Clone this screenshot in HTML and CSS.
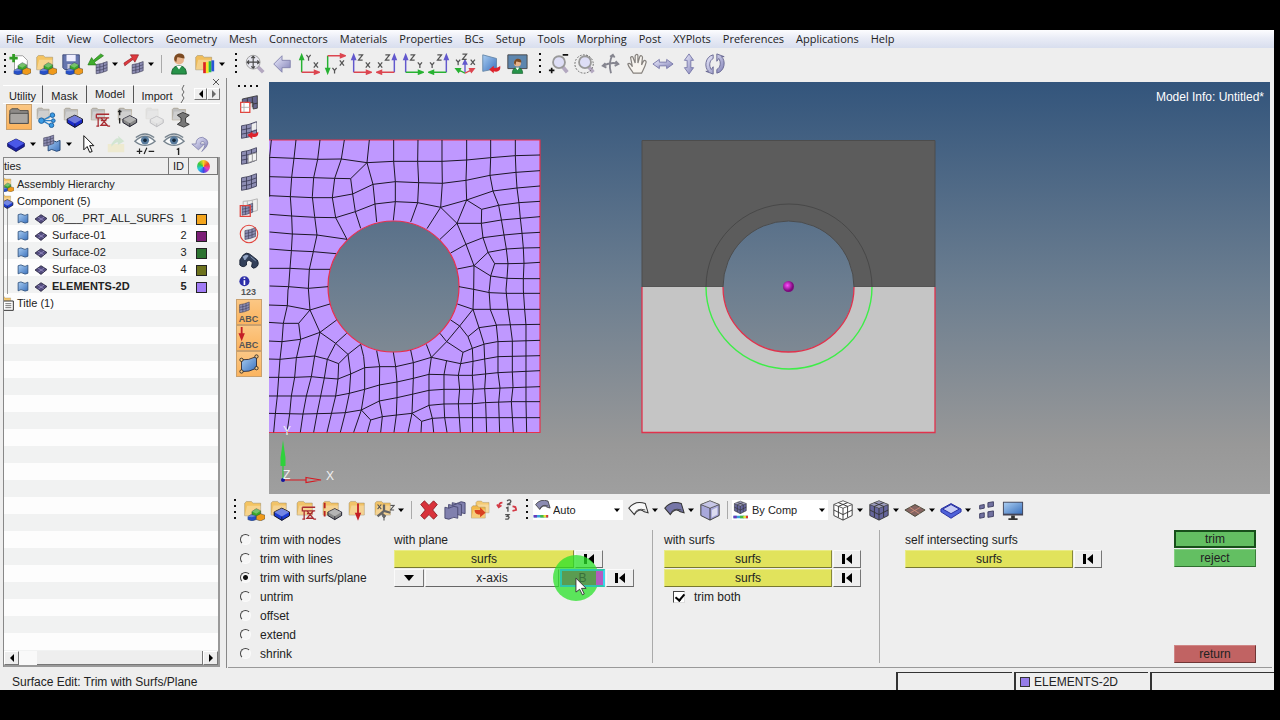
FILE: index.html
```html
<!DOCTYPE html>
<html lang="en">
<head>
<meta charset="utf-8">
<title>Model Info: Untitled*</title>
<link rel="stylesheet" href="styles.css">
</head>
<body>
<svg class="defs" aria-hidden="true">
<defs>
<linearGradient id="sky" x1="0" y1="0" x2="0" y2="1"><stop offset="0" stop-color="#33557c"/><stop offset=".5" stop-color="#6c7e90"/><stop offset=".88" stop-color="#989898"/><stop offset="1" stop-color="#9f9f9f"/></linearGradient>
<linearGradient id="lav" x1="0" y1="0" x2="1" y2="1"><stop offset="0" stop-color="#efefff"/><stop offset="1" stop-color="#7f7fb5"/></linearGradient>
<linearGradient id="blu" x1="0" y1="0" x2="1" y2="1"><stop offset="0" stop-color="#a9cdf2"/><stop offset="1" stop-color="#3c72bd"/></linearGradient>
<radialGradient id="ball" cx=".4" cy=".4"><stop offset="0" stop-color="#ff4cff"/><stop offset="1" stop-color="#7b0a7b"/></radialGradient>
<symbol id="folder" viewBox="0 0 24 24"><path d="M2 20V5l2-2h6l2 2h9v15z" fill="currentColor" stroke="#8b7a52" stroke-opacity=".5"/><path d="M2 20L5 8h16v12z" fill="#fff" opacity=".28"/></symbol>
<symbol id="box" viewBox="0 0 24 24"><path d="M2 11l10-5 10 5v5l-10 6-10-6z" fill="currentColor" stroke="#112" stroke-width="1.3"/><path d="M2 11l10-5 10 5-10 6z" fill="#fff" opacity=".38"/><path d="M12 17v5" stroke="#112"/></symbol>
<symbol id="c3" viewBox="0 0 24 24"><g stroke="#234" stroke-width=".6"><path d="M6 11l6-4 6 3v6l-6 4-6-3z" fill="#3ba82c"/><path d="M0 18l5-3 7 2v5l-6 2-6-2z" fill="#2750c8"/><path d="M12 17l6-3 6 2v5l-6 3-6-2z" fill="#ef9a1c"/></g><path d="M6 11l6-4 6 3-6 4zM0 18l5-3 7 2-6 2z" fill="#fff" opacity=".3"/></symbol>
<symbol id="mesh" viewBox="0 0 24 24"><path d="M3 7q9-1 18-5v15q-9 4-18 5z" fill="#8c8cb2" stroke="#3b3b55"/><path d="M9 6v15M15 4v15M3 12q9-1 18-5M3 17q9-1 18-5" fill="none" stroke="#3b3b55"/></symbol>
<symbol id="caret" viewBox="0 0 8 8"><path d="M1 2.500h6L4 6z" fill="#000"/></symbol>
<symbol id="new" viewBox="0 0 24 24"><path d="M6 3h9l5 5v13H6z" fill="#fff" stroke="#999"/><path d="M5 1v9M.5 5.500h9" stroke="#2f9b22" stroke-width="3"/><use href="#c3" width="19" height="19" x="5" y="5"/></symbol>
<symbol id="open" viewBox="0 0 24 24"><use href="#folder" color="#f4c462" width="22" height="22"/><use href="#c3" width="19" height="19" x="5" y="5"/></symbol>
<symbol id="save" viewBox="0 0 24 24"><path d="M2 2h18v16H4l-2-2z" fill="#6575ae" stroke="#3e4a78"/><path d="M6 2h10v7H6z" fill="#eef"/><path d="M7 12h9v6H7z" fill="#ccd"/><use href="#c3" width="19" height="19" x="5" y="5"/></symbol>
<symbol id="imp" viewBox="0 0 24 24"><use href="#mesh" width="16" height="16" x="8" y="8"/><path d="M15 1L7 8 5 5 1 13l9 0-2-3 10-7z" fill="#3fae2c" stroke="#237517" stroke-width=".7"/></symbol>
<symbol id="exp" viewBox="0 0 24 24"><use href="#mesh" width="16" height="16" x="8" y="8"/><path d="M1 11l9-6-2-3h9l-4 8-2-3-9 7z" fill="#df383d" stroke="#8f1d24" stroke-width=".7"/></symbol>
<symbol id="user" viewBox="0 0 24 24"><path d="M4 23c0-7 4-9 8-9s8 2 8 9z" fill="#27934a" stroke="#17602e"/><path d="M9 14l3 4 3-4z" fill="#fff"/><circle cx="12" cy="7" r="5.500" fill="#e8b48c"/><path d="M7 8c-2-9 12-10 11-2-4 0-6-2-8-1l-1 5z" fill="#7b4a22"/></symbol>
<symbol id="fcolor" viewBox="0 0 24 24"><use href="#folder" color="#f0be5c" width="22" height="22"/><path d="M10 10h3v12h-3z" fill="#d22"/><path d="M13 10h3v12h-3z" fill="#f5e42a"/><path d="M16 9h3v12h-3z" fill="#27b84b"/><path d="M19 8h3v12h-3z" fill="#2756d8"/></symbol>
<symbol id="zoomfit" viewBox="0 0 24 24"><path d="M15 15l6 6" stroke="#b3a8c0" stroke-width="4"/><circle cx="10" cy="10" r="7.500" fill="#e6e6ee" stroke="#999"/><path d="M10 3.500v13M3.500 10h13M8 5.500l2-2 2 2M8 14.500l2 2 2-2M5.500 8l-2 2 2 2M14.500 8l2 2-2 2" fill="none" stroke="#444" stroke-width="1.200"/></symbol>
<symbol id="back" viewBox="0 0 24 24"><path d="M3 12l9-9v5h9v8h-9v5z" fill="url(#lav)" stroke="#8383ad"/></symbol>
<symbol id="up" viewBox="0 0 24 24"><path d="M4 21V5M2 7l2-5 2 5z" fill="currentColor" stroke="currentColor" stroke-width="1.600"/></symbol>
<symbol id="right" viewBox="0 0 24 24"><path d="M4 21h14M18 19l5 2-5 2z" fill="currentColor" stroke="currentColor" stroke-width="1.600"/></symbol>
<symbol id="gx" viewBox="0 0 6 7"><path d="M1 1l4 5M5 1L1 6" stroke="#555" stroke-width="1.200"/></symbol>
<symbol id="gy" viewBox="0 0 6 7"><path d="M1 1l2 2.500L5 1M3 3.500V6.500" fill="none" stroke="#555" stroke-width="1.200"/></symbol>
<symbol id="gz" viewBox="0 0 6 7"><path d="M1 1h4L1 6h4" fill="none" stroke="#555" stroke-width="1.200"/></symbol>
<symbol id="xy" viewBox="0 0 24 24"><use href="#up" color="#27b232"/><use href="#right" color="#dc4650"/><use href="#gy" x="8" y="1" width="7" height="8"/><use href="#gx" x="16" y="9" width="7" height="8"/></symbol>
<symbol id="xyi" viewBox="0 0 24 24"><path d="M4 3v15M2 17l2 5 2-5z" fill="#27b232" stroke="#27b232" stroke-width="1.600"/><path d="M4 3h14M18 1l5 2-5 2z" fill="#dc4650" stroke="#dc4650" stroke-width="1.600"/><use href="#gy" x="8" y="15" width="7" height="8"/><use href="#gx" x="16" y="7" width="7" height="8"/></symbol>
<symbol id="zx" viewBox="0 0 24 24"><use href="#up" color="#6258cd"/><use href="#right" color="#dc4650"/><use href="#gz" x="8" y="1" width="7" height="8"/><use href="#gx" x="16" y="9" width="7" height="8"/></symbol>
<symbol id="xz" viewBox="0 0 24 24"><g transform="matrix(-1 0 0 1 24 0)"><use href="#up" color="#6258cd"/><use href="#right" color="#dc4650"/></g><use href="#gz" x="9" y="1" width="7" height="8"/><use href="#gx" x="1" y="9" width="7" height="8"/></symbol>
<symbol id="zy" viewBox="0 0 24 24"><use href="#up" color="#6258cd"/><use href="#right" color="#27b232"/><use href="#gz" x="8" y="1" width="7" height="8"/><use href="#gy" x="16" y="9" width="7" height="8"/></symbol>
<symbol id="yz" viewBox="0 0 24 24"><g transform="matrix(-1 0 0 1 24 0)"><use href="#up" color="#6258cd"/><use href="#right" color="#27b232"/></g><use href="#gz" x="9" y="1" width="7" height="8"/><use href="#gy" x="1" y="9" width="7" height="8"/></symbol>
<symbol id="iso" viewBox="0 0 24 24"><path d="M12 21V9M10 12l2-4 2 4z" fill="#6258cd" stroke="#6258cd" stroke-width="1.500"/><path d="M12 22l-8-4M7 17l-5 0 3 4z" fill="#27b232" stroke="#27b232" stroke-width="1.500"/><path d="M12 22l8-4M17 17l5 0-3 4z" fill="#dc4650" stroke="#dc4650" stroke-width="1.500"/><use href="#gy" x="1" y="6" width="7" height="8"/><use href="#gz" x="8" y="0" width="7" height="8"/><use href="#gx" x="17" y="6" width="7" height="8"/></symbol>
<symbol id="screen" viewBox="0 0 24 24"><path d="M3 2l15 4v11l-15 3z" fill="url(#blu)" stroke="#6788a8"/><path d="M22 14c1 6-3 7-7 6v2l-5-4 5-4v2c3 1 5 0 7-2z" fill="#dd222c"/></symbol>
<symbol id="uscreen" viewBox="0 0 24 24"><path d="M2 2h21v15H2z" fill="#5d86ae" stroke="#444"/><use href="#user" width="17" height="19" x="4" y="5"/></symbol>
<symbol id="lens" viewBox="0 0 24 24"><path d="M16 15l5 6" stroke="#b3a8c0" stroke-width="4"/><circle cx="12" cy="10" r="6.500" fill="#dedef6" stroke="#999" stroke-width="2"/></symbol>
<symbol id="zoomio" viewBox="0 0 24 24"><use href="#lens"/><path d="M16 2h6M1 19h6M4 16v6" stroke="#111" stroke-width="1.800"/></symbol>
<symbol id="zoomc" viewBox="0 0 24 24"><use href="#lens"/><circle cx="11" cy="12" r="10" fill="none" stroke="#555" stroke-dasharray="2 1.500" stroke-width=".9"/></symbol>
<symbol id="rot" viewBox="0 0 24 24"><path d="M14 2c-4 6-4 13-2 20M3 14c6-3 12-4 17-2M11 4l3-2 2 3M6 11l-3 3 4 2M17 9l3 3-4 2" fill="none" stroke="#85858f" stroke-width="2"/></symbol>
<symbol id="hand" viewBox="0 0 24 24"><path d="M8 22c-2-4-5-6-6-10 2-2 4 1 5 3L5 5c1-2 3-1 3 1l2 5V3c1-2 3-2 3 0v8l2-7c1-2 3-1 3 1l-1 8 2-4c2-2 3 0 3 1-1 5-3 8-5 12z" fill="#f7f4ef" stroke="#85817d" stroke-width="1.300"/></symbol>
<symbol id="lr" viewBox="0 0 24 24"><path d="M1 12l7-5v3h8V7l7 5-7 5v-3H8v3z" fill="url(#lav)" stroke="#7777a9"/></symbol>
<symbol id="ud" viewBox="0 0 24 24"><path d="M12 1l5 7h-3v8h3l-5 7-5-7h3V8H7z" fill="url(#lav)" stroke="#7777a9"/></symbol>
<symbol id="spin" viewBox="0 0 24 24"><path d="M10 2C1 4 0 16 5 20H2l8 3V15l-2 3C5 14 6 8 10 6zM14 22c9-2 10-14 5-18h3l-8-3v8l2-3c3 4 2 10-2 12z" fill="url(#lav)" stroke="#666691"/></symbol>
<symbol id="gfold" viewBox="0 0 24 24"><use href="#folder" color="#bdbdbd" width="22" height="20"/></symbol>
<symbol id="dfold" viewBox="0 0 24 24"><path d="M2 19V5l2-2h7l2 2h9v14z" fill="#8d8a87" stroke="#4c4a48"/><path d="M2 19V9l2-1h18v11z" fill="#a9a6a2" stroke="#4c4a48"/></symbol>
<symbol id="fasm" viewBox="0 0 24 24"><use href="#gfold" width="20" height="20"/><path d="M8 16l9-5M8 16l10 0M8 16l9 5" stroke="#2c81c8" stroke-width="1.500"/><g fill="#3b9be4" stroke="#1b5d9b"><circle cx="7" cy="16" r="3"/><circle cx="19" cy="10" r="2.500"/><circle cx="20" cy="16" r="2"/><circle cx="18" cy="21" r="2.500"/></g></symbol>
<symbol id="gbox" viewBox="0 0 24 24"><use href="#gfold" width="22" height="22"/><use href="#box" color="#1b2bc7" width="20" height="20" x="4" y="5"/></symbol>
<symbol id="anch" viewBox="0 0 24 24"><path d="M8 9h14M8 9v4h14M10 13v9M13 13h7l-7 8h7zM8 22h3M13 16h6M20 22h3" fill="none" stroke="currentColor" stroke-width="1.400"/></symbol>
<symbol id="gload" viewBox="0 0 24 24"><use href="#gfold" width="22" height="22"/><use href="#anch" color="#a82b31"/></symbol>
<symbol id="gprop" viewBox="0 0 24 24"><use href="#gfold" width="22" height="22"/><use href="#box" color="#888" width="18" height="18" x="6" y="6"/><path d="M4 4v6M4 13v6M2 6h4" stroke="#222" stroke-width="1.500"/></symbol>
<symbol id="gdis" viewBox="0 0 24 24"><g opacity=".25"><use href="#gfold" width="22" height="20"/><use href="#box" color="#bbb" width="18" height="17" x="6" y="7"/></g></symbol>
<symbol id="gsec" viewBox="0 0 24 24"><use href="#gfold" width="22" height="22"/><path d="M8 10l6-3 7 3-4 3v5l4 2-6 3-7-3 4-3v-4z" fill="#777" stroke="#333"/></symbol>
<symbol id="bbox" viewBox="0 0 24 24"><path d="M2 11l10-5 10 5v4l-10 6-10-6z" fill="#1a20a0" stroke="#0c0f50"/><path d="M2 11l10-5 10 5-10 6z" fill="#4a58e8"/></symbol>
<symbol id="surf" viewBox="0 0 24 24"><path d="M3 5q6-3 9 0t9-1v15q-6 3-9 0t-9 1z" fill="url(#blu)" stroke="#274b79" stroke-width="1.500"/></symbol>
<symbol id="msurf" viewBox="0 0 24 24"><use href="#surf" x="5" y="4" width="19" height="20"/><use href="#mesh" width="16" height="16" x="0" y="0"/></symbol>
<symbol id="cursor" viewBox="0 0 24 24"><path d="M7 2v17l4-4 3 7 3-1-3-7h5z" fill="#fff" stroke="#111" stroke-width="1.200"/></symbol>
<symbol id="upd" viewBox="0 0 24 24"><g opacity=".35"><path d="M3 12h18v9H3z" fill="#f0e59a"/><path d="M7 12q5-8 8-6l-1-3 7 6-7 4v-3q-3 0-7 5z" fill="#a0d6a0"/></g></symbol>
<symbol id="eye" viewBox="0 0 24 24"><path d="M1 9Q12-2 23 9 12 18 1 9z" fill="#f7f9fa" stroke="#77848f" stroke-width="1.500"/><path d="M2 5Q12-3 22 5" fill="none" stroke="#76838e" stroke-width="1.500"/><circle cx="12" cy="8" r="4.500" fill="#587b9d"/><circle cx="12" cy="8" r="2" fill="#162a3d"/></symbol>
<symbol id="eyepm" viewBox="0 0 24 24"><use href="#eye"/><path d="M3 20h6M6 17v6M11 23l3-7M16 20h6" stroke="#222" stroke-width="1.300"/></symbol>
<symbol id="eye1" viewBox="0 0 24 24"><use href="#eye"/><path d="M15 18l2-1v7" fill="none" stroke="#222" stroke-width="1.500"/></symbol>
<symbol id="undo" viewBox="0 0 24 24"><path d="M13 21Q27 9 14 4 6 4 6 12H1l8 7 7-7h-5q1-4 4-3 4 4-2 12z" fill="url(#lav)" stroke="#8383ad"/></symbol>
<symbol id="elem" viewBox="0 0 24 24"><path d="M1 13l11-8 11 7-11 9z" fill="#544d80" stroke="#222038" stroke-width="1.500"/><path d="M6 9l11 7M7 17l11-8" stroke="#aaa3d5" stroke-width="1.200"/></symbol>
<symbol id="v1" viewBox="0 0 24 24"><path d="M4 6l18-4v15l-5 1v-8l-13 3z" fill="#66668e" stroke="#333"/><path d="M10 5v7M16 4v12M17 12l5-1" stroke="#333"/><path d="M2 10h11v12H2z" fill="#fff" stroke="#e2443d" stroke-width="1.500"/><path d="M6 10v12M2 16h11" stroke="#aaa"/></symbol>
<symbol id="v2" viewBox="0 0 24 24"><use href="#mesh"/><path d="M15 5l6-2v8l-6 2z" fill="#eee"/><path d="M23 14c1 6-3 7-7 6v3l-6-5 6-4v2c3 1 5 0 7-2z" fill="#dd222c"/></symbol>
<symbol id="v3" viewBox="0 0 24 24"><use href="#mesh"/><path d="M11 11l10-3v9l-10 3z" fill="#f3f3f3" stroke="#888"/><path d="M16 10v8" stroke="#888"/></symbol>
<symbol id="v5" viewBox="0 0 24 24"><path d="M5 4q8 0 17-3v14q-8 3-17 3zM10 4v13M16 3v13" fill="#eee" stroke="#aaa"/><use href="#mesh" width="18" height="17" x="1" y="5"/><path d="M1.500 9h12v13h-12z" fill="none" stroke="#e2443d" stroke-width="1.500"/></symbol>
<symbol id="v6" viewBox="0 0 24 24"><use href="#mesh" width="17" height="17" x="5" y="3"/><circle cx="12" cy="12" r="10.500" fill="none" stroke="#e2443d" stroke-width="1.300"/></symbol>
<symbol id="binoc" viewBox="0 0 24 24"><path d="M1 12L5 6q4-4 8-1l9 7q3 6-2 9-3 2-5-1l1-5-4-3-3 2 0 4q-4 4-8 0z" fill="#33405a" stroke="#141d2f"/><path d="M5 8q4-3 6-1l-4 5zM14 8l6 5" fill="#95a7c7" stroke="#95a7c7"/></symbol>
<symbol id="info" viewBox="0 0 24 24"><circle cx="7" cy="9" r="5.500" fill="#2d2ea8"/><path d="M7 8v5M7 5v1.600" stroke="#fff" stroke-width="1.800"/></symbol>
<symbol id="dmesh" viewBox="0 0 24 24"><use href="#mesh" width="14" height="14" x="0" y="1"/></symbol>
<symbol id="load" viewBox="0 0 24 24"><path d="M4 1v12M2 9l2 5 2-5z" fill="#c41f26" stroke="#c41f26" stroke-width="2"/></symbol>
<symbol id="quad" viewBox="0 0 24 24"><path d="M3 7q8 1 18-4v14q-9 5-18 4z" fill="url(#blu)" stroke="#223"/><g fill="#f5c989" stroke="#222"><circle cx="3" cy="7" r="2"/><circle cx="21" cy="3" r="2"/><circle cx="21" cy="17" r="2"/><circle cx="3" cy="21" r="2"/></g></symbol>
<symbol id="yf" viewBox="0 0 24 24"><use href="#folder" color="#f1c368" width="22" height="21"/></symbol>
<symbol id="ybox" viewBox="0 0 24 24"><use href="#yf"/><use href="#box" color="#1b3bd2" width="20" height="20" x="4" y="5"/></symbol>
<symbol id="title" viewBox="0 0 24 24"><use href="#yf"/><path d="M8 9h15v14H8z" fill="#fff" stroke="#333" stroke-width="1.500"/><path d="M11 13h9M11 16h9M11 19h9" stroke="#333"/></symbol>
<symbol id="yload" viewBox="0 0 24 24"><use href="#yf"/><use href="#anch" color="#a82b31"/></symbol>
<symbol id="yprop" viewBox="0 0 24 24"><use href="#yf"/><use href="#box" color="#888" width="18" height="18" x="6" y="6"/><path d="M4 4v6M4 13v6" stroke="#b22" stroke-width="2"/></symbol>
<symbol id="yarr" viewBox="0 0 24 24"><use href="#yf"/><path d="M12 5v12M10 16l2 5 2-5z" fill="#c41f26" stroke="#c41f26" stroke-width="2"/></symbol>
<symbol id="ysys" viewBox="0 0 24 24"><use href="#yf"/><path d="M12 13V6M12 13l7 2M12 13l-7 6M9 15l4 4" stroke="#656565" stroke-width="2.500"/><use href="#gx" x="4" y="5" width="6" height="7"/><use href="#gz" x="18" y="6" width="6" height="7"/><use href="#gy" x="9" y="17" width="6" height="7"/></symbol>
<symbol id="del" viewBox="0 0 24 24"><path d="M3 6l4-4 5 5 5-5 4 4-5 6 5 6-4 4-5-5-5 5-4-4 5-6z" fill="#d9323b" stroke="#8c1c23"/></symbol>
<symbol id="layers" viewBox="0 0 24 24"><g fill="#8080ae" stroke="#484870"><path d="M9 4q5 2 7 0t7 0v12q-5-2-7 0t-7 0z"/><path d="M5 6q5 2 7 0t7 0v12q-5-2-7 0t-7 0z"/><path d="M1 9q5 2 7 0t7 0v12q-5-2-7 0t-7 0z"/></g></symbol>
<symbol id="org" viewBox="0 0 24 24"><use href="#folder" color="#f4ca72" width="18" height="18" x="5" y="0"/><use href="#folder" color="#f3b948" width="19" height="19" x="0" y="5"/><path d="M5 12h6v-3l6 6-6 5v-3c-3 0-6-1-6-5z" fill="#d94122"/></symbol>
<symbol id="renum" viewBox="0 0 24 24"><path d="M12 2q3-2 4 0t-4 4h4M11 10l2-1v5M10 17h4l-2 2q4 0 1 3h-3" fill="none" stroke="#555" stroke-width="1.500"/><path d="M7 4q-4 0-4 5M1 6l2 3 3-2M18 8q4 0 4 4M18 13l4-1-1-4" fill="none" stroke="#d33945" stroke-width="1.800"/></symbol>
<symbol id="shell" viewBox="0 0 24 24"><path d="M2 10Q9 1 20 5l3 10-4-1Q13 9 8 17z" fill="currentColor" stroke="#333" stroke-width="1.100"/><path d="M8 17q2-8 12-5" fill="none" stroke="#444"/></symbol>
<symbol id="spec" viewBox="0 0 24 6"><path d="M1 1h22v4H1z" fill="#3aa5d8"/><path d="M1 1h5v4H1z" fill="#6739be"/><path d="M11 1h6v4h-6z" fill="#49b842"/><path d="M16 1h4v4h-4z" fill="#e5e236"/><path d="M20 1h3v4h-3z" fill="#dd342e"/></symbol>
<symbol id="auto" viewBox="0 0 24 24"><use href="#shell" color="#8c8cb2" y="-3" height="21"/><use href="#spec" y="18" width="20" height="5"/></symbol>
<symbol id="shellw" viewBox="0 0 24 24"><use href="#shell" color="#f8f8f8"/></symbol>
<symbol id="shellp" viewBox="0 0 24 24"><use href="#shell" color="#7676a8"/></symbol>
<symbol id="cube" viewBox="0 0 24 24"><path d="M2 6l10-4 10 4v12l-10 5-10-5z" fill="currentColor" stroke="#333"/><path d="M2 6l10 4 10-4M12 10v13" fill="none" stroke="#333"/><path d="M2 6l10-4 10 4-10 4z" fill="#fff" opacity=".35"/></symbol>
<symbol id="cubel" viewBox="0 0 24 24"><use href="#cube" color="#a8a8da"/><path d="M14 12l6-3v8l-6 3z" fill="#fff" opacity=".6"/></symbol>
<symbol id="grid3" viewBox="0 0 24 24"><use href="#cube"/><path d="M2 12l10 5 10-5M7 8v12M17 8v12M7 4l10 4M17 4L7 8" fill="none" stroke="#333" stroke-width="1"/></symbol>
<symbol id="cubew" viewBox="0 0 24 24"><use href="#grid3" color="#fff"/></symbol>
<symbol id="cubep" viewBox="0 0 24 24"><use href="#grid3" color="#66669c"/></symbol>
<symbol id="bycomp" viewBox="0 0 24 24"><use href="#cubep" x="1" width="19" height="18"/><use href="#spec" y="19" x="1" width="20" height="5"/></symbol>
<symbol id="redel" viewBox="0 0 24 24"><path d="M1 12l11-6 11 6-11 7z" fill="#856562" stroke="#443"/><path d="M6 9l11 7M7 15l11-6" stroke="#cf8e7c"/></symbol>
<symbol id="slab" viewBox="0 0 24 24"><path d="M1 11l11-6 11 6v3l-11 7-11-7z" fill="#4f62d9" stroke="#222a9b"/><path d="M3 11l9-5 9 5-9 5z" fill="#c8cdf5" stroke="#222a9b"/></symbol>
<symbol id="shrink" viewBox="0 0 24 24"><g fill="#7171a0" stroke="#3d3d60"><path d="M4 7l5-1v4l-5 1zM13 4l6-1v5l-6 1zM4 16l5-1v5l-5 1zM13 14l6-1v6l-6 1z"/></g></symbol>
<symbol id="monitor" viewBox="0 0 24 24"><path d="M1 3h22v15H1z" fill="#445"/><path d="M2 4h20v12H2z" fill="url(#blu)"/><path d="M10 18h4v3h3v2H7v-2h3z" fill="#333"/></symbol>
<symbol id="reset" viewBox="0 0 12 12"><path d="M1 1h3v10H1zM11 1v10L5 6z" fill="#000"/></symbol>
<symbol id="tl" viewBox="0 0 8 8"><path d="M6 0v8L2 4z"/></symbol>
<symbol id="tr" viewBox="0 0 8 8"><path d="M2 0v8l4-4z"/></symbol>
</defs>
</svg>

<div class="app">
  <nav class="menubar">
    <a href="#">File</a><a href="#">Edit</a><a href="#">View</a><a href="#">Collectors</a><a href="#">Geometry</a><a href="#">Mesh</a><a href="#">Connectors</a><a href="#">Materials</a><a href="#">Properties</a><a href="#">BCs</a><a href="#">Setup</a><a href="#">Tools</a><a href="#">Morphing</a><a href="#">Post</a><a href="#">XYPlots</a><a href="#">Preferences</a><a href="#">Applications</a><a href="#">Help</a>
  </nav>

  <div class="toolbar top">
    <span class="grip left"></span>
    <button class="ico" aria-label="New"><svg><use href="#new"/></svg></button>
    <button class="ico" aria-label="Open"><svg><use href="#open"/></svg></button>
    <button class="ico" aria-label="Save"><svg><use href="#save"/></svg></button>
    <button class="ico" aria-label="Import"><svg><use href="#imp"/></svg></button><svg class="caret"><use href="#caret"/></svg>
    <button class="ico" aria-label="Export"><svg><use href="#exp"/></svg></button><svg class="caret"><use href="#caret"/></svg>
    <span class="sep"></span>
    <button class="ico" aria-label="User profile"><svg><use href="#user"/></svg></button>
    <button class="ico" aria-label="Colors"><svg><use href="#fcolor"/></svg></button><svg class="caret"><use href="#caret"/></svg>
    <span class="grip"></span>
    <button class="ico" aria-label="Fit"><svg><use href="#zoomfit"/></svg></button>
    <button class="ico wide" aria-label="Previous view"><svg><use href="#back"/></svg></button>
    <button class="ico" aria-label="XY top"><svg><use href="#xy"/></svg></button>
    <button class="ico" aria-label="XY bottom"><svg><use href="#xyi"/></svg></button>
    <button class="ico" aria-label="XZ left"><svg><use href="#zx"/></svg></button>
    <button class="ico" aria-label="XZ right"><svg><use href="#xz"/></svg></button>
    <button class="ico" aria-label="YZ left"><svg><use href="#zy"/></svg></button>
    <button class="ico" aria-label="YZ right"><svg><use href="#yz"/></svg></button>
    <button class="ico" aria-label="Isometric"><svg><use href="#iso"/></svg></button>
    <button class="ico" aria-label="Reverse view"><svg><use href="#screen"/></svg></button>
    <button class="ico" aria-label="User views"><svg><use href="#uscreen"/></svg></button>
    <span class="grip"></span>
    <button class="ico" aria-label="Zoom in or out"><svg><use href="#zoomio"/></svg></button>
    <button class="ico" aria-label="Circle zoom"><svg><use href="#zoomc"/></svg></button>
    <button class="ico" aria-label="Rotate"><svg><use href="#rot"/></svg></button>
    <button class="ico" aria-label="Pan"><svg><use href="#hand"/></svg></button>
    <button class="ico" aria-label="Horizontal"><svg><use href="#lr"/></svg></button>
    <button class="ico" aria-label="Vertical"><svg><use href="#ud"/></svg></button>
    <button class="ico" aria-label="Spin"><svg><use href="#spin"/></svg></button>
  </div>

  <div class="workspace">
    <aside class="sidebar">
      <div class="closerow"><button class="close" aria-label="Close"><svg viewBox="0 0 8 8"><path d="M1 1l6 6M7 1L1 7" stroke="#555"/></svg></button></div>
      <div class="tabs">
        <button class="tab">Utility</button><button class="tab">Mask</button><button class="tab active">Model</button><button class="tab last">Import</button>
        <svg class="tear" viewBox="0 0 6 18"><path d="M4 0l-2 4 2 3-2 3 2 3-3 5" fill="none" stroke="#666"/></svg>
        <button class="step" aria-label="Previous tabs"><svg><use href="#tl"/></svg></button><button class="step dim" aria-label="Next tabs"><svg><use href="#tr"/></svg></button>
      </div>
      <div class="siderow">
        <button class="ico on" aria-label="Model view"><svg><use href="#dfold"/></svg></button>
        <button class="ico" aria-label="Assembly"><svg><use href="#fasm"/></svg></button>
        <button class="ico" aria-label="Component view"><svg><use href="#gbox"/></svg></button>
        <button class="ico" aria-label="Load view"><svg><use href="#gload"/></svg></button>
        <button class="ico" aria-label="Property view"><svg><use href="#gprop"/></svg></button>
        <button class="ico" aria-label="Material view"><svg><use href="#gdis"/></svg></button>
        <button class="ico" aria-label="Section view"><svg><use href="#gsec"/></svg></button>
      </div>
      <div class="siderow second">
        <button class="ico" aria-label="Components"><svg><use href="#bbox"/></svg></button><svg class="caret"><use href="#caret"/></svg>
        <button class="ico" aria-label="Elements and geometry"><svg><use href="#msurf"/></svg></button><svg class="caret"><use href="#caret"/></svg>
        <button class="ico" aria-label="Selector"><svg><use href="#cursor"/></svg></button>
        <button class="ico eye" aria-label="Add to panel"><svg><use href="#upd"/></svg></button>
        <button class="ico eye" aria-label="Show or hide"><svg><use href="#eyepm"/></svg></button>
        <button class="ico eye" aria-label="Isolate"><svg><use href="#eye1"/></svg></button>
        <button class="ico" aria-label="Undo"><svg><use href="#undo"/></svg></button>
      </div>
      <div class="treebox">
        <table class="tree">
          <thead><tr><th>ties</th><th class="id">ID</th><th class="col"><span class="wheel"></span></th></tr></thead>
          <tbody>
            <tr><td colspan="3"><div class="node root"><svg><use href="#open"/></svg>Assembly Hierarchy</div></td></tr>
            <tr><td colspan="3"><div class="node root"><svg><use href="#ybox"/></svg>Component (5)</div></td></tr>
            <tr><td><div class="node leaf"><svg><use href="#surf"/></svg><svg><use href="#elem"/></svg>06___PRT_ALL_SURFS</div></td><td class="num">1</td><td><span class="sw orange"></span></td></tr>
            <tr><td><div class="node leaf"><svg><use href="#surf"/></svg><svg><use href="#elem"/></svg>Surface-01</div></td><td class="num">2</td><td><span class="sw plum"></span></td></tr>
            <tr><td><div class="node leaf"><svg><use href="#surf"/></svg><svg><use href="#elem"/></svg>Surface-02</div></td><td class="num">3</td><td><span class="sw green"></span></td></tr>
            <tr><td><div class="node leaf"><svg><use href="#surf"/></svg><svg><use href="#elem"/></svg>Surface-03</div></td><td class="num">4</td><td><span class="sw olive"></span></td></tr>
            <tr class="current"><td><div class="node leaf"><svg><use href="#surf"/></svg><svg><use href="#elem"/></svg>ELEMENTS-2D</div></td><td class="num">5</td><td><span class="sw violet"></span></td></tr>
            <tr><td colspan="3"><div class="node root"><svg><use href="#title"/></svg>Title (1)</div></td></tr>
          </tbody>
        </table>
        <div class="hscroll"><button class="step" aria-label="Scroll left"><svg><use href="#tl"/></svg></button><span class="trough"></span><span class="thumb"></span><button class="step" aria-label="Scroll right"><svg><use href="#tr"/></svg></button></div>
      </div>
    </aside>

    <main class="main">
      <div class="viewrow">
        <div class="vbar">
          <span class="hgrip"></span>
          <button class="ico" aria-label="Mask"><svg><use href="#v1"/></svg></button>
          <button class="ico" aria-label="Reverse mask"><svg><use href="#v2"/></svg></button>
          <button class="ico" aria-label="Unmask adjacent"><svg><use href="#v3"/></svg></button>
          <button class="ico" aria-label="Unmask all"><svg><use href="#mesh"/></svg></button>
          <button class="ico" aria-label="Mask not shown"><svg><use href="#v5"/></svg></button>
          <button class="ico" aria-label="Spherical clipping"><svg><use href="#v6"/></svg></button>
          <button class="ico" aria-label="Find"><svg><use href="#binoc"/></svg></button>
          <button class="ico tag"><svg><use href="#info"/></svg><span>123</span></button>
          <button class="ico tag on"><svg><use href="#dmesh"/></svg><span>ABC</span></button>
          <button class="ico tag on"><svg><use href="#load"/></svg><span>ABC</span></button>
          <button class="ico on" aria-label="Fixed points"><svg><use href="#quad"/></svg></button>
        </div>
        <div class="canvas">
          <svg class="scene" viewBox="269 82 1001 412" preserveAspectRatio="xMinYMin slice">
            <rect x="269" y="82" width="1001" height="412" fill="url(#sky)"/>
            <path fill="#bf98ff" stroke="#e8304c" stroke-width="1.200" fill-rule="evenodd" d="M260 140H540V432.500H260zM328 286.500a65.500 65.500 0 1 0 131 0a65.500 65.500 0 1 0-131 0z"/>
            <g class="mesh">
              <g transform="translate(268 130) scale(.33333)">
                <path d="M10 30L5 80V200M84 30L78 85 71 142 67 200 71 258 73 312 70 365 66 415 62 470 60 480M156 30L149 88 137 143 133 200 140 260 147 315 136 365 124 418 121 475M229 30L220 87 200 145 193 203 203 263 237 328M304 30L297 98 315 163 321 222 326 276M297 98L248 146 254 192 262 245 278 295M377 30V94L382 155V215L376 271M450 30L449 94 452 158 449 218 428 276M522 30V94L523 160 518 232 477 296M596 30V90L594 151 596 210 518 232M567 280L516 328M518 232L567 280 594 343 618 407 617 480M668 30V83L666 136 675 183 692 226 700 268 708 315 715 357 720 401 717 445 714 480M742 30V77L744 127 747 174 753 220 757 265 762 309 766 354 768 400 766 446V480"/>
                <path d="M5 82L78 85 149 88 220 87 297 98 377 94H449 522L596 90 668 83 742 77 816 75M5 140L71 142 137 143 200 145 248 146M5 197L67 200 133 203H193L254 192 315 163 382 155 452 158 523 160 594 151 666 136 744 127 816 122M5 253L71 258 140 262 203 263 262 245 321 222 382 215 449 218 518 232M567 280L596 210 675 183 747 174 816 168M596 210L641 238 692 226 753 218 816 214M641 238L640 280 645 323 660 367 680 401 668 438 664 480M567 280H640L700 270 757 265 816 260M5 306L73 312 147 315 237 328M548 369L594 343 645 323 708 315 762 310 816 307M568 417L618 407 660 367 715 357 766 354 816 353M618 407L668 438 717 445 766 446H816M680 401H720L768 400 816 397M5 357L70 362 136 365 204 371M5 415H66L124 418H186M573 470L617 478 665 488 714 490H816M5 468L62 470 121 475 180 470"/>
              </g>
              <g transform="translate(268 290) scale(.33333)">
                <path d="M60 0L58 47M121 -5L126 60M0 45L58 47 126 60 186 42M568 42L615 58H816M617 0L615 58 633 113 648 162 650 207 653 252 650 296 653 340 656 427M58 47L46 100 42 155 36 208 32 262 28 318 22 372 17 427M126 60L92 100 98 148 85 205 80 262 70 318 65 372 57 427M0 97L46 100H92M0 153L42 155 98 148 156 127 206 90M126 60L156 127 203 160 240 193 212 221M203 160L236 130M240 193L278 163M0 207L36 208 85 203 140 198 178 208 212 221M156 127L140 198 130 260 115 318 105 372 97 427M203 160L178 208 169 264 158 318 147 372 137 427M212 221L210 267 203 318 190 372 177 427M0 262H80L130 260 169 264 210 267M240 193L248 252 244 310 232 368 217 427"/>
                <path d="M210 267L248 252 290 233 335 230H383L436 218 490 202 535 212 578 221 615 214 650 207 690 200 816 197M278 163L287 200 290 233V298L280 360 257 427M0 318H203L244 310 290 298 334 285 387 276 436 265 483 253 528 254 571 256H613L690 248 816 242M0 370L105 372 190 370 232 368 280 360 334 333 387 323 436 312 483 301 528 298H616L650 296 816 290M280 360L308 390 298 427M308 390L343 380 387 375 432 370 483 346 528 342 616 341 650 338 730 335H816M432 370L461 394 459 427M461 394L493 385 530 383H816"/>
                <path d="M326 182L335 230 334 333 343 380 338 427M376 187L383 230 387 276V323L385 375 378 427M428 180L436 218V265L432 370 420 427M475 163L490 202 483 253V346L493 385 497 427M516 130L536 155 490 202M536 155L585 187 578 221 571 256 575 298 571 342 577 427M536 211L528 254V342L530 383 537 427M548 90L575 108 536 155M575 108L615 58M575 108L600 140 613 175 615 214 613 256 616 298 613 341 614 427M600 140L633 113 690 105 816 103M585 187L613 175 650 162 688 155 816 151M663 0L667 59 685 105 690 155V248L696 294 692 338 695 427M714 0L720 59 727 105 733 151V245L735 290 730 335 736 427M766 0L770 59 774 105V335L776 427"/>
              </g>
            </g>
            <path d="M642 140.500H935V287H854A65.500 66 0 0 0 723 287H642z" fill="#5c5c5c" stroke="#4c4c4c"/>
            <path d="M642 287H723A65.500 65 0 0 0 854 287H935V432.500H642z" fill="#c5c5c5"/>
            <path d="M642 287V432.500H935V287M723 287A65.500 65 0 0 0 854 287" fill="none" stroke="#e0324c" stroke-width="1.300"/>
            <path d="M706 287A83 83 0 0 1 872 287" fill="none" stroke="#484848"/>
            <path d="M706 287A83 82 0 0 0 872 287" fill="none" stroke="#3eed48" stroke-width="1.400"/>
            <circle cx="788.500" cy="286.500" r="5.500" fill="url(#ball)"/>
            <path d="M283 479V454" stroke="#2ec83c" stroke-width="1.200"/><path d="M280.500 458L283 440l2.500 18v8h-5z" fill="#2ed23c"/>
            <path d="M283 480H306M306 477.500L321 480l-15 2.500z" fill="none" stroke="#d71920" stroke-width="1.200"/><circle cx="283" cy="480" r="2" fill="#15159c"/>
            <text x="283" y="435" class="axis">Y</text><text x="283" y="479" class="axis">Z</text><text x="326" y="480" class="axis">X</text>
          </svg>
          <span class="info">Model Info: Untitled*</span>
        </div>
      </div>

      <div class="toolbar low">
        <span class="grip"></span>
        <button class="ico" aria-label="Assemblies"><svg><use href="#open"/></svg></button>
        <button class="ico" aria-label="Components"><svg><use href="#ybox"/></svg></button>
        <button class="ico" aria-label="Load collectors"><svg><use href="#yload"/></svg></button>
        <button class="ico" aria-label="Properties"><svg><use href="#yprop"/></svg></button>
        <button class="ico" aria-label="Loads"><svg><use href="#yarr"/></svg></button>
        <button class="ico" aria-label="Systems"><svg><use href="#ysys"/></svg></button><svg class="caret"><use href="#caret"/></svg>
        <span class="sep"></span>
        <button class="ico" aria-label="Delete"><svg><use href="#del"/></svg></button>
        <button class="ico" aria-label="Card edit"><svg><use href="#layers"/></svg></button>
        <button class="ico" aria-label="Organize"><svg><use href="#org"/></svg></button>
        <button class="ico" aria-label="Renumber"><svg><use href="#renum"/></svg></button>
        <span class="grip"></span>
        <label class="combo"><svg class="glyph"><use href="#auto"/></svg><select aria-label="Geometry color mode"><option>Auto</option></select><svg class="caret"><use href="#caret"/></svg></label>
        <button class="ico" aria-label="Wireframe geometry"><svg><use href="#shellw"/></svg></button><svg class="caret"><use href="#caret"/></svg>
        <button class="ico" aria-label="Shaded geometry"><svg><use href="#shellp"/></svg></button><svg class="caret"><use href="#caret"/></svg>
        <button class="ico" aria-label="Transparency"><svg><use href="#cubel"/></svg></button>
        <span class="sep"></span>
        <label class="combo comp"><svg class="glyph"><use href="#bycomp"/></svg><select aria-label="Element color mode"><option>By Comp</option></select><svg class="caret"><use href="#caret"/></svg></label>
        <button class="ico" aria-label="Wireframe elements"><svg><use href="#cubew"/></svg></button><svg class="caret"><use href="#caret"/></svg>
        <button class="ico" aria-label="Shaded elements"><svg><use href="#cubep"/></svg></button><svg class="caret"><use href="#caret"/></svg>
        <button class="ico" aria-label="2D elements"><svg><use href="#redel"/></svg></button><svg class="caret"><use href="#caret"/></svg>
        <button class="ico" aria-label="Layers"><svg><use href="#slab"/></svg></button><svg class="caret"><use href="#caret"/></svg>
        <button class="ico" aria-label="Shrink elements"><svg><use href="#shrink"/></svg></button>
        <button class="ico" aria-label="Display"><svg><use href="#monitor"/></svg></button>
      </div>

      <form class="panel">
        <div class="modes">
          <label><input type="radio" name="mode">trim with nodes</label>
          <label><input type="radio" name="mode">trim with lines</label>
          <label><input type="radio" name="mode" checked>trim with surfs/plane</label>
          <label><input type="radio" name="mode">untrim</label>
          <label><input type="radio" name="mode">offset</label>
          <label><input type="radio" name="mode">extend</label>
          <label><input type="radio" name="mode">shrink</label>
        </div>
        <section class="group plane">
          <div class="line">with plane</div>
          <div class="line first"><button type="button" class="btn yellow">surfs</button><button type="button" class="btn reset" aria-label="Reset"><svg><use href="#reset"/></svg></button></div>
          <div class="line">
            <button type="button" class="btn drop" aria-label="Choose axis"><svg viewBox="0 0 12 6"><path d="M1 0h10L6 6z"/></svg></button>
            <button type="button" class="btn axisname">x-axis</button>
            <span class="pick"><span class="halo"></span><button type="button" class="base">B</button><svg class="pointer" viewBox="0 0 14 20"><path d="M1 1v15l4-3 3 6 2-1-3-6h5z" fill="#fff" stroke="#333"/></svg></span>
            <button type="button" class="btn reset" aria-label="Reset"><svg><use href="#reset"/></svg></button>
          </div>
        </section>
        <section class="group surfs">
          <div class="line">with surfs</div>
          <div class="line"><button type="button" class="btn yellow">surfs</button><button type="button" class="btn reset" aria-label="Reset"><svg><use href="#reset"/></svg></button></div>
          <div class="line"><button type="button" class="btn yellow">surfs</button><button type="button" class="btn reset" aria-label="Reset"><svg><use href="#reset"/></svg></button></div>
          <label class="line both"><input type="checkbox" checked>trim both</label>
        </section>
        <section class="group self">
          <div class="line">self intersecting surfs</div>
          <div class="line"><button type="button" class="btn yellow">surfs</button><button type="button" class="btn reset" aria-label="Reset"><svg><use href="#reset"/></svg></button></div>
        </section>
        <div class="actions">
          <button type="button" class="btn go default">trim</button>
          <button type="button" class="btn go">reject</button>
          <button type="button" class="btn stop">return</button>
        </div>
      </form>
    </main>
  </div>

  <footer class="status">
    <span class="msg">Surface Edit: Trim with Surfs/Plane</span>
    <span class="cell"></span><span class="cell comp"><i class="chip"></i>ELEMENTS-2D</span><span class="cell end"></span>
  </footer>
</div>
</body>
</html>
```
FILE: styles.css
```css
* { box-sizing: border-box; }
body {
  margin: 0;
  padding: 30px 6px 30px 0;
  min-height: 100vh;
  display: flex;
  background: #000;
  color: #222;
  font-family: "Liberation Sans", Arial, sans-serif;
  font-size: 12px;
}
.defs { position: absolute; width: 0; height: 0; }
button, select, input { font: inherit; color: inherit; margin: 0; }
button { padding: 0; border: 0; background: none; }
svg { display: block; flex: none; }

.app { flex: 1; min-width: 0; display: flex; flex-direction: column; background: #eee; }

.menubar {
  display: flex;
  gap: 12px;
  height: 18px;
  padding-left: 6px;
  align-items: center;
  background: linear-gradient(#fdfdff, #e9ecf6 45%, #d8deee);
  font-family: "Open Sans", "Noto Sans", sans-serif;
  font-size: 11px;
  line-height: 18px;
}
.menubar a { color: #222; text-decoration: none; white-space: nowrap; }

.toolbar { display: flex; align-items: center; }
.top { height: 30px; padding-top: 2px; }
.ico { width: 26px; height: 26px; flex: none; display: flex; align-items: center; justify-content: center; }
.ico svg { width: 22px; height: 22px; }
.ico.wide { width: 28px; }
.on { background: linear-gradient(#fbc784, #fbb45f); border: 1px solid #c9a06e; }
.caret { width: 8px; height: 8px; margin-right: 2px; }
.sep { width: 1px; height: 18px; margin: 0 4px; background: #aaa; }
.grip { width: 2px; height: 22px; margin: 0 4px 0 7px; background: repeating-linear-gradient(#111 0 2px, transparent 2px 6px); }
.top .grip + .ico { margin-left: 1px; }
.top .grip.left { margin: 0 0 0 4px; }
.top .wide ~ .grip { margin-left: 9px; }

.workspace { flex: 1; display: flex; }
.sidebar { width: 227px; flex: none; display: flex; flex-direction: column; border-right: 1px solid #888; padding: 0 6px 0 3px; }
.closerow { display: flex; justify-content: flex-end; height: 7px; }
.close svg { width: 8px; height: 8px; }
.tabs { display: flex; height: 18px; align-items: stretch; font-size: 11px; }
.tab { width: 40px; border-right: 1px solid #555; border-top: 1px solid #fff; padding-top: 3px; }
.tab + .tab { width: 44px; }
.tab + .tab.active { width: 47px; padding: 0 0 2px; }
.tab + .tab.last { width: 46px; border-right: 0; }
.tear { width: 6px; height: 18px; margin-right: 8px; }
.step { width: 13px; height: 12px; align-self: center; display: flex; align-items: center; justify-content: center; background: #eee; border: 1px solid #fff; border-right-color: #777; border-bottom-color: #777; }
.step svg { width: 8px; height: 8px; }
.step.dim svg { opacity: .55; }
.siderow { display: flex; height: 27px; align-items: center; gap: 1px; padding-left: 3px; border-top: 1px solid #fff; }
.siderow.second { padding: 0; gap: 0; border: 0; }
.second .ico svg { width: 20px; height: 20px; }
.ico.eye { width: 29px; }
.second .ico.eye svg { width: 22px; height: 22px; }

.treebox { flex: 1; display: flex; flex-direction: column; margin-bottom: 1px; border-left: 1px solid #888; border-right: 2px solid #999; background: repeating-linear-gradient(#f1f2f2 0 17px, #fdfdfd 17px 34px) 0 17px; }
.tree { width: 100%; table-layout: fixed; border-collapse: collapse; font-size: 11px; }
.tree th { height: 17px; padding: 0; font-weight: normal; text-align: left; background: #eee; border-top: 1px solid #888; border-bottom: 1px solid #777; }
.tree th.id { width: 20px; text-align: center; border-left: 1px solid #777; }
.tree th.col { width: 29px; border-left: 1px solid #777; border-right: 1px solid #777; }
.wheel { display: block; width: 13px; height: 13px; margin: 0 auto; border-radius: 50%; background: conic-gradient(#f4d429, #ef4a28, #e33cc4, #3d49e8, #29c7e8, #38c838, #f4d429); }
.tree td { height: 17px; padding: 0; }
.node { display: flex; align-items: center; height: 17px; white-space: nowrap; }
.root { overflow: hidden; }
.root svg { width: 16px; height: 16px; margin: 1px 3px 0 -6px; }
.leaf { gap: 4px; padding-left: 12px; background: linear-gradient(90deg, transparent 3px, #999 3px 4px, transparent 4px); }
.leaf svg { width: 14px; height: 13px; margin-top: 1px; }
.tree .num { text-align: right; padding-right: 2px; }
.sw { display: block; width: 11px; height: 11px; margin: 3px 0 0 7px; border: 1px solid #222; }
.orange { background: #f3a51d; }
.plum { background: #7c1f77; }
.green { background: #2c7330; }
.olive { background: #6d721d; }
.violet { background: #a07bf5; }
.current { font-weight: bold; }
.hscroll { display: flex; margin-top: auto; height: 16px; border-bottom: 2px solid #999; background: #eee; }
.hscroll .step { width: 15px; height: 14px; }
.trough { width: 18px; background: #f9f9f9; }
.thumb { flex: 1; border-right: 1px solid #777; border-bottom: 1px solid #777; }

.main { flex: 1; min-width: 0; display: flex; flex-direction: column; padding: 4px 2px 0 1px; }
.viewrow { flex: 1; display: flex; padding-right: 2px; }
.vbar { width: 41px; flex: none; display: flex; flex-direction: column; align-items: center; }
.hgrip { width: 22px; height: 2px; margin: 3px 0 4px; background: repeating-linear-gradient(90deg, #111 0 2px, transparent 2px 6px); }
.vbar .ico svg { width: 20px; height: 20px; }
.vbar .tag { flex-direction: column; justify-content: flex-start; font-size: 9px; line-height: 9px; font-weight: bold; color: #555; }
.vbar .tag svg { width: 22px; height: 22px; margin-bottom: -7px; }
.canvas { flex: 1; min-width: 0; position: relative; min-height: 412px; overflow: hidden; background: #9f9f9f; }
.scene { position: absolute; inset: 0; width: 100%; height: 100%; }
.mesh path { fill: none; stroke: #1c1626; stroke-width: 1px; vector-effect: non-scaling-stroke; }
.axis { fill: #f0f0f0; font-size: 12px; }
.info { position: absolute; top: 8px; right: 6px; color: #fff; }

.low { height: 31px; }
.low .grip { margin: 0 5px 0 6px; }
.low .ico svg { width: 22px; height: 22px; }
.combo { display: flex; align-items: center; width: 90px; height: 20px; margin-right: 2px; background: #fff; }
.combo.comp { width: 96px; }
.combo .glyph { width: 19px; height: 19px; }
.combo select { flex: 1; min-width: 0; appearance: none; border: 0; padding: 0 0 0 1px; background: none; font-size: 11px; }

.panel { display: grid; grid-template-columns: 154fr 270fr 228fr 282fr 98fr; height: 143px; padding: 5px 0 0 12px; border-bottom: 1px solid #999; }
.modes label { display: flex; align-items: center; gap: 9px; height: 19px; }
.modes input { appearance: none; width: 11px; height: 11px; border-radius: 50%; border: 1px solid #fafafa; border-top-color: #444; border-left-color: #444; background: #f6f6f6; }
.modes input:checked { background: radial-gradient(circle, #111 0 2px, #f6f6f6 3px); }
.group { margin-bottom: 4px; }
.plane { border-right: 1px solid #aaa; padding-right: 18px; margin-right: 11px; }
.surfs { border-right: 1px solid #aaa; padding-right: 18px; margin-right: 12px; }
.self { padding: 0 72px 0 13px; }
.line { display: flex; align-items: center; gap: 1px; height: 19px; }
.line.first { padding-right: 31px; }
.btn { height: 18px; display: flex; align-items: center; justify-content: center; border: 1px solid #fafafa; border-right-color: #777; border-bottom-color: #666; }
.yellow { flex: 1; background: #e1e35c; border-color: #e9eb86; border-right-color: #87883a; border-bottom-color: #77782f; }
.reset { width: 28px; }
.reset svg { width: 12px; height: 12px; }
.drop { width: 30px; }
.drop svg { width: 12px; height: 6px; }
.axisname { flex: 1; }
.pick { position: relative; width: 45px; height: 18px; }
.halo { position: absolute; left: -7px; top: -14px; width: 46px; height: 46px; border-radius: 50%; background: rgba(42, 226, 42, .75); z-index: 1; }
.base { position: relative; z-index: 2; width: 45px; height: 18px; border: 2px solid #2fc6a8; border-right: 2px solid #3bd6ec; background: linear-gradient(90deg, #5a9c51 0 34px, #b45bc0 34px); color: #38703a; }
.pointer { position: absolute; z-index: 3; left: 15px; top: 8px; width: 13px; height: 19px; }
.both { padding-left: 9px; gap: 9px; }
.both input { appearance: none; width: 12px; height: 12px; border: 1px solid #ddd; border-top-color: #444; border-left-color: #444; background: #fff; position: relative; }
.both input:checked::after { content: ""; position: absolute; left: 3px; top: 0; width: 4px; height: 7px; border: solid #000; border-width: 0 2px 2px 0; rotate: 40deg; }
.actions { display: flex; flex-direction: column; gap: 1px; padding-right: 16px; margin-bottom: 4px; }
.go { background: #63bf62; border-color: #83cf80; border-right-color: #3b7f3b; border-bottom-color: #2f6f2f; }
.go.default { border: 2px solid #174f1a; }
.stop { margin-top: auto; background: #c16363; border-color: #cf8585; border-right-color: #6f3636; border-bottom-color: #6f3636; }

.status { display: flex; height: 22px; padding-left: 12px; align-items: stretch; gap: 2px; line-height: 20px; }
.msg { flex: 1; padding-top: 4px; }
.cell { width: 116px; margin-top: 4px; border-left: 2px solid #333; border-top: 1px solid #333; }
.cell.comp { display: flex; align-items: center; gap: 4px; width: 134px; padding-left: 4px; }
.cell.end { width: 124px; }
.chip { width: 10px; height: 10px; background: #957ce8; border: 1px solid #333; }
```
